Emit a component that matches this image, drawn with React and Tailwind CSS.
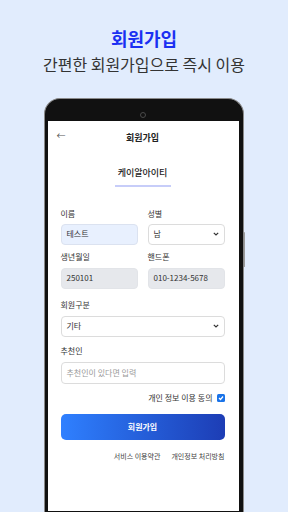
export default function App() {
  const font = { fontFamily: '"Noto Sans CJK KR", "Noto Sans", sans-serif' };
  return (
    <div className="w-[288px] h-[512px] overflow-hidden bg-[#e1ecfd] flex flex-col items-center" style={font}>
      <div className="mt-[25px] text-[18px] leading-[26px] font-bold text-[#1b30f2]">회원가입</div>
      <div className="mt-[1px] text-[16px] leading-[24px] text-[#333]">간편한 회원가입으로 즉시 이용</div>
      <div className="relative mt-[22px] w-[200px] h-[415px] rounded-t-[16px] bg-[#111] border-x-[1.5px] border-t-[1.5px] border-[#8a8a8a] pl-[2.5px] pr-[4.5px] pt-[22px] pb-[2px] flex flex-col shrink-0">
        <div className="absolute -right-[2px] top-[133px] w-[1.5px] h-[35px] rounded-full bg-[#9a9a9a]" />
        <div className="relative">
          <div className="absolute left-1/2 -translate-x-1/2 -top-[9px] w-[6px] h-[6px] rounded-full border border-[#4a4a4a]" />
        </div>
        <div className="bg-white flex-1 flex flex-col pl-[13px] pr-[14px] pb-0">
          <div className="relative h-[30px] mt-[2px] flex items-center justify-center">
            <span className="absolute left-[-4px] top-[6px] text-[9px] text-[#555]">←</span>
            <span className="text-[9px] font-semibold text-[#222]">회원가입</span>
          </div>
          <div className="mt-[13px] flex justify-center">
            <div className="w-[56px] flex flex-col items-center">
              <span className="text-[9px] leading-[14px] font-medium text-[#222]">케이알아이티</span>
              <div className="mt-[5px] w-full h-[1.5px] bg-[#c7cdf9]" />
            </div>
          </div>
          <div className="mt-[21px] grid grid-cols-2 gap-x-[10px]">
            <div className="flex flex-col">
              <span className="text-[8px] leading-[12px] text-[#333]">이름</span>
              <div className="mt-[4px] h-[21px] rounded-[4px] border border-[#dbe2f0] bg-[#e8f0fe] px-[5px] flex items-center text-[8px] text-[#333]">테스트</div>
            </div>
            <div className="flex flex-col">
              <span className="text-[8px] leading-[12px] text-[#333]">성별</span>
              <div className="mt-[4px] h-[21px] rounded-[4px] border border-[#dcdcdc] bg-white px-[5px] flex items-center justify-between text-[8px] text-[#333]">
                <span>남</span>
                <svg width="6" height="4" viewBox="0 0 6 4"><path d="M0.8 0.8 L3 3 L5.2 0.8" stroke="#333" strokeWidth="1.2" fill="none" /></svg>
              </div>
            </div>
            <div className="flex flex-col mt-[6px]">
              <span className="text-[8px] leading-[12px] text-[#333]">생년월일</span>
              <div className="mt-[5px] h-[21px] rounded-[4px] border border-[#e2e4e8] bg-[#e6e8ec] px-[5px] flex items-center text-[8px] text-[#333]">250101</div>
            </div>
            <div className="flex flex-col mt-[6px]">
              <span className="text-[8px] leading-[12px] text-[#333]">핸드폰</span>
              <div className="mt-[5px] h-[21px] rounded-[4px] border border-[#e2e4e8] bg-[#e6e8ec] px-[5px] flex items-center text-[8px] text-[#333]">010-1234-5678</div>
            </div>
          </div>
          <div className="mt-[10px] flex flex-col">
            <span className="text-[8px] leading-[12px] text-[#333]">회원구분</span>
            <div className="mt-[5px] h-[21px] rounded-[4px] border border-[#dcdcdc] bg-white px-[5px] flex items-center justify-between text-[8px] text-[#333]">
              <span>기타</span>
              <svg width="6" height="4" viewBox="0 0 6 4"><path d="M0.8 0.8 L3 3 L5.2 0.8" stroke="#333" strokeWidth="1.2" fill="none" /></svg>
            </div>
          </div>
          <div className="mt-[8px] flex flex-col">
            <span className="text-[8px] leading-[12px] text-[#333]">추천인</span>
            <div className="mt-[5px] h-[22px] rounded-[4px] border border-[#dcdcdc] bg-white px-[5px] flex items-center text-[8px] text-[#999]">추천인이 있다면 입력</div>
          </div>
          <div className="mt-[8px] flex items-center justify-end gap-[4px]">
            <span className="text-[8px] text-[#333]">개인 정보 이용 동의</span>
            <div className="w-[8px] h-[8px] rounded-[1.5px] bg-[#1a73e8] flex items-center justify-center">
              <svg width="6" height="6" viewBox="0 0 6 6"><path d="M1 3 L2.5 4.5 L5 1.5" stroke="white" strokeWidth="1.2" fill="none" /></svg>
            </div>
          </div>
          <div className="mt-[10px] h-[26px] rounded-[5px] bg-gradient-to-r from-[#2f80ff] to-[#1d3db5] flex items-center justify-center text-[8px] font-bold text-white">회원가입</div>
          <div className="mt-[11px] flex justify-end gap-[11px] text-[7px] text-[#444]">
            <span>서비스 이용약관</span>
            <span>개인정보 처리방침</span>
          </div>
        </div>
      </div>
    </div>
  );
}
